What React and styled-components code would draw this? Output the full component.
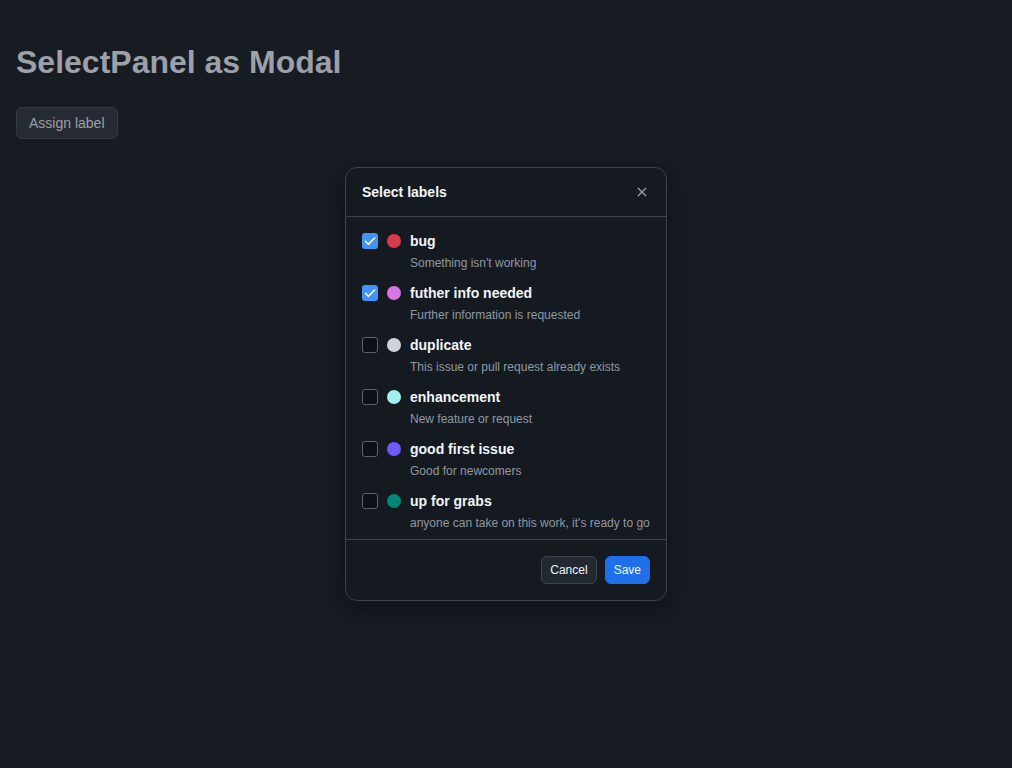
import React, { useState } from 'react';
import styled, { createGlobalStyle } from 'styled-components';

const GlobalStyle = createGlobalStyle`
  html, body {
    margin: 0;
    background: #171b22;
  }
  body {
    font-family: "Liberation Sans", Arial, Helvetica, sans-serif;
    color: #f0f6fc;
    min-height: 768px;
  }
`;

const LABELS = [
  { id: 'bug', name: 'bug', color: '#d73a4a', description: "Something isn't working" },
  { id: 'info', name: 'futher info needed', color: '#d876e3', description: 'Further information is requested' },
  { id: 'dup', name: 'duplicate', color: '#cfd3d7', description: 'This issue or pull request already exists' },
  { id: 'enh', name: 'enhancement', color: '#a2eeef', description: 'New feature or request' },
  { id: 'gfi', name: 'good first issue', color: '#7057ff', description: 'Good for newcomers' },
  { id: 'ufg', name: 'up for grabs', color: '#008672', description: "anyone can take on this work, it's ready to go" },
];

function App() {
  const [selected, setSelected] = useState(['bug', 'info']);

  const toggle = (id) => {
    setSelected((prev) =>
      prev.includes(id) ? prev.filter((x) => x !== id) : [...prev, id]
    );
  };

  return (
    <Page>
      <GlobalStyle />
      <Title>SelectPanel as Modal</Title>
      <TriggerButton>Assign label</TriggerButton>

      <DialogArea>
        <Dialog role="dialog" aria-label="Select labels">
          <DialogHeader>
            <DialogTitle>Select labels</DialogTitle>
            <CloseButton aria-label="Close">
              <svg width="16" height="16" viewBox="0 0 16 16" fill="currentColor">
                <path d="M3.72 3.72a.75.75 0 0 1 1.06 0L8 6.94l3.22-3.22a.749.749 0 0 1 1.275.326.749.749 0 0 1-.215.734L9.06 8l3.22 3.22a.749.749 0 0 1-.326 1.275.749.749 0 0 1-.734-.215L8 9.06l-3.22 3.22a.751.751 0 0 1-1.042-.018.751.751 0 0 1-.018-1.042L6.94 8 3.72 4.78a.75.75 0 0 1 0-1.06Z" />
              </svg>
            </CloseButton>
          </DialogHeader>

          <LabelList>
            {LABELS.map((label) => {
              const checked = selected.includes(label.id);
              return (
                <LabelItem key={label.id} onClick={() => toggle(label.id)}>
                  <Checkbox $checked={checked}>
                    {checked && (
                      <svg width="16" height="16" viewBox="0 0 16 16" fill="none">
                        <polyline
                          points="3.5,8.3 6.4,11.2 12.6,5"
                          stroke="#ffffff"
                          strokeWidth="1.6"
                          strokeLinecap="round"
                          strokeLinejoin="round"
                        />
                      </svg>
                    )}
                  </Checkbox>
                  <DotSlot>
                    <Dot $color={label.color} />
                  </DotSlot>
                  <LabelText>
                    <LabelName>{label.name}</LabelName>
                    <LabelDescription>{label.description}</LabelDescription>
                  </LabelText>
                </LabelItem>
              );
            })}
          </LabelList>

          <DialogFooter>
            <FooterButton>Cancel</FooterButton>
            <FooterButton $primary>Save</FooterButton>
          </DialogFooter>
        </Dialog>
      </DialogArea>
    </Page>
  );
}

const Page = styled.div`
  padding: 42px 16px 0;
`;

const Title = styled.h1`
  margin: 0;
  font-size: 32px;
  line-height: 40px;
  font-weight: 700;
  color: #9ca0a8;
`;

const TriggerButton = styled.button`
  margin-top: 25px;
  height: 32px;
  padding: 0 12px;
  background: #262b33;
  border: 1px solid #343a42;
  border-radius: 6px;
  color: #9ca0a8;
  font-family: inherit;
  font-size: 14px;
`;

const DialogArea = styled.div`
  display: flex;
  justify-content: center;
  margin-top: 28px;
`;

const Dialog = styled.div`
  width: 320px;
  background: #151a21;
  border: 1px solid #3d444d;
  border-radius: 12px;
  box-shadow: 0 8px 24px rgba(1, 4, 9, 0.4);
  overflow: hidden;
`;

const DialogHeader = styled.div`
  display: flex;
  align-items: center;
  justify-content: space-between;
  height: 48px;
  padding: 0 16px;
  border-bottom: 1px solid #3d444d;
`;

const DialogTitle = styled.h2`
  margin: 0;
  font-size: 14px;
  font-weight: 700;
  color: #f0f6fc;
`;

const CloseButton = styled.button`
  display: flex;
  align-items: center;
  justify-content: center;
  width: 16px;
  height: 16px;
  padding: 0;
  border: none;
  background: transparent;
  color: #9198a1;
`;

const LabelList = styled.ul`
  list-style: none;
  margin: 0;
  padding: 8px 0 2px;
  border-bottom: 1px solid #3d444d;
`;

const LabelItem = styled.li`
  display: flex;
  align-items: flex-start;
  gap: 8px;
  padding: 6px 16px 5px;
  cursor: pointer;
`;

const Checkbox = styled.span`
  box-sizing: border-box;
  display: flex;
  align-items: center;
  justify-content: center;
  flex: none;
  width: 16px;
  height: 16px;
  margin-top: 2px;
  border-radius: 3px;
  background: ${(p) => (p.$checked ? '#4493f8' : '#0d1117')};
  border: ${(p) => (p.$checked ? 'none' : '1px solid #5b626b')};
`;

const DotSlot = styled.span`
  display: flex;
  align-items: center;
  justify-content: center;
  flex: none;
  width: 16px;
  height: 20px;
`;

const Dot = styled.span`
  width: 14px;
  height: 14px;
  border-radius: 50%;
  background: ${(p) => p.$color};
`;

const LabelText = styled.div`
  display: flex;
  flex-direction: column;
  gap: 3px;
  min-width: 0;
`;

const LabelName = styled.span`
  font-size: 14px;
  line-height: 20px;
  font-weight: 700;
  color: #f0f6fc;
`;

const LabelDescription = styled.span`
  font-size: 12px;
  line-height: 18px;
  color: #9198a1;
  white-space: nowrap;
`;

const DialogFooter = styled.div`
  display: flex;
  justify-content: flex-end;
  gap: 8px;
  padding: 16px;
`;

const FooterButton = styled.button`
  height: 28px;
  padding: 0 8px;
  border-radius: 6px;
  font-family: inherit;
  font-size: 12px;
  color: #f0f6fc;
  background: ${(p) => (p.$primary ? '#1f6feb' : '#212830')};
  border: 1px solid ${(p) => (p.$primary ? '#1f6feb' : '#3d444d')};
`;

export default App;
